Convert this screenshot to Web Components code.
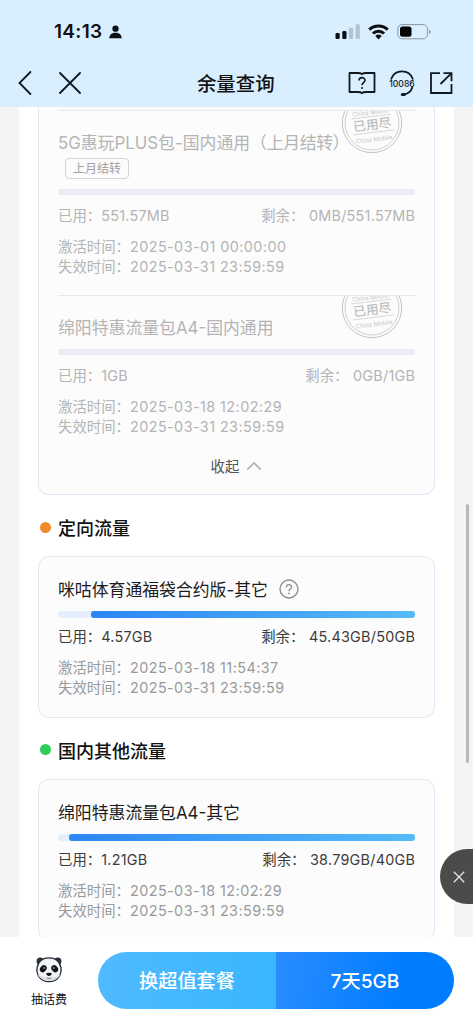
<!DOCTYPE html>
<html lang="zh-CN">
<head>
<meta charset="utf-8">
<title>余量查询</title>
<style>
  html, body { margin: 0; height: 100%; }
  body { font-family: Inter, "Noto Sans CJK SC", sans-serif; color: #111; background: #fff; overflow: hidden; }
</style>
</head>
<body>
<balance-app></balance-app>
<script>
const define = (name, html) => customElements.define(name, class extends HTMLElement {
  connectedCallback() {
    if (this.shadowRoot) return;
    const root = this.attachShadow({ mode: 'open' });
    root.innerHTML = typeof html === 'function' ? html(this) : html;
  }
});

define('status-bar', `
<style>
  :host { display: flex; height: 59px; padding: 0 41px 0 54px; align-items: flex-start; justify-content: space-between; box-sizing: border-box; }
  .left { display: flex; align-items: center; margin-top: 22px; height: 20px; }
  .time { font-size: 19px; font-weight: 600; letter-spacing: 0.3px; line-height: 20px; width: 55px; white-space: nowrap; }
  .right { display: flex; align-items: center; margin-top: 22px; height: 20px; }
  svg { display: block; }
</style>
<div class="left"><span class="time">14:13</span>
  <svg width="13" height="14" viewBox="0 0 14 14" fill="#0b1014"><circle cx="7" cy="3.400" r="3.400"/><path d="M.3 13.800C.5 9.400 3.400 7.700 7 7.700s6.500 1.700 6.700 6.100z"/></svg>
</div>
<div class="right">
  <svg width="97" height="20" viewBox="0 0 97 20">
    <g fill="#0b0f12"><rect x="0.500" y="11" width="4.200" height="6" rx="1.200"/><rect x="7.300" y="9" width="4.200" height="8" rx="1.200"/></g>
    <g fill="#b2c3d1"><rect x="13.900" y="5.700" width="4.200" height="11.300" rx="1.200"/><rect x="20.600" y="2.300" width="4.200" height="14.700" rx="1.200"/></g>
    <g fill="none" stroke="#0b0f12" stroke-width="3"><path d="M34.300 7.600a13.300 13.300 0 0 1 18.400 0"/><path d="M37.900 11.500a8 8 0 0 1 11.200 0"/></g>
    <path d="M43.500 17.400l-3.200-3.500a4.700 4.700 0 0 1 6.400 0z" fill="#0b0f12"/>
    <rect x="62.800" y="2.600" width="29.600" height="14.200" rx="4.300" fill="none" stroke="#8798a4"/>
    <rect x="65" y="4.600" width="11.500" height="10.200" rx="2.500" fill="#030506"/>
    <path d="M94 7.500c2.200.8 2.200 3.800 0 4.600z" fill="#8798a4"/>
  </svg>
</div>`);

define('nav-bar', `
<style>
  :host { display: grid; grid-template-columns: 1fr auto 1fr; align-items: center; height: 48px; padding: 0 20px 0 17px; }
  h1 { margin: 1px 0 0 1.500px; font-size: 19.400px; font-weight: 500; line-height: 24px; }
  .l, .r { display: flex; align-items: center; }
  .l { gap: 25.500px; } .r { justify-content: flex-end; gap: 12.500px; }
  svg { display: block; fill: none; stroke: #101820; stroke-width: 1.8; }
</style>
<div class="l">
  <svg width="16" height="24" viewBox="0 0 16 24"><path d="M13.400 1L2.500 12l10.900 11" stroke-linecap="round"/></svg>
  <svg width="22" height="22" viewBox="0 0 22 22"><path d="M1 1l20 20M21 1L1 21" stroke-linecap="round"/></svg>
</div>
<h1><slot></slot></h1>
<div class="r">
  <svg width="28" height="24" viewBox="0 0 28 24"><path d="M14 3.200c-1.200-1.200-2.300-1.200-4-1.200H1.500v19H10c1.700 0 2.800 0 4 1.200 1.200-1.200 2.300-1.200 4-1.200h8.500V2H18c-1.700 0-2.800 0-4 1.200z" stroke-linejoin="round"/><path d="M11 9.600c0-4 6-3.900 6-.3 0 2.400-3 2.400-3 5" stroke-width="1.600"/><circle cx="14" cy="17" r="1" fill="#101820" stroke="none"/></svg>
  <svg width="28" height="28" viewBox="0 0 28 28"><g transform="translate(-1 0)"><path d="M3.300 9.800C5 4.900 9 2.300 14 2.300s9 2.600 10.700 7.500M24.300 18.500c-1.300 4-4.200 6.300-8.800 7" stroke-linecap="round"/><path d="M14.300 25.600h2" stroke-width="3" stroke-linecap="round"/><text x="14" y="17.700" text-anchor="middle" font-size="8.800" font-weight="500" fill="#101820" stroke="none" textLength="25.500" lengthAdjust="spacingAndGlyphs">10086</text></g></svg>
  <svg width="24" height="24" viewBox="0 0 24 24"><path d="M11 2.200H2V22h20.500v-9M14.500 2.200h8v8M22.300 2.400L11.500 13"/></svg>
</div>`);

define('used-stamp', `
<style>:host { display: block; width: 62px; height: 62px; } svg { display: block; }</style>
<svg width="62" height="62" viewBox="0 0 62 62">
  <g fill="none" stroke="#c4c4c6"><circle cx="31" cy="31" r="29.700" stroke-width="1"/><circle cx="31" cy="31" r="27" stroke-width=".8"/></g>
  <g transform="rotate(-7 31 31)" fill="#bdbdbf" text-anchor="middle">
    <path d="M11 24.500h40M11 40.500h41" stroke="#cfcfd1" stroke-width=".8"/>
    <text x="31" y="37.300" font-size="12.800" font-weight="500">已用尽</text>
    <text x="31" y="49.500" font-size="6" fill="#c6c6c8" textLength="37">China Mobile</text>
    <text x="31" y="22.500" font-size="6" fill="#c6c6c8" textLength="37">China Mobile</text>
  </g>
</svg>`);

define('usage-item', el => {
  const a = n => el.getAttribute(n) || '';
  const has = n => el.hasAttribute(n);
  return `
<style>
  :host { display: block; position: relative; overflow: hidden; color: #3c3c3c; }
  :host([spent]) { color: #b4b4b4; border-top: 1px solid #e6e6ee; height: 184px; }
  .title { display: flex; align-items: center; height: 24px; margin-top: 19px; font-size: 16.850px; color: #1c1c1e; white-space: nowrap; }
  :host([spent]) .title { color: inherit; margin-top: 18.500px; }
  .title svg { margin-left: 11px; margin-top: 1px; }
  em { font-style: normal; letter-spacing: -0.300px; }
  .tag { display: block; box-sizing: border-box; width: 64px; height: 21px; margin: 4.500px 0 0 7px; border: 1px solid #d4d4d4; border-radius: 4px; font-size: 12px; line-height: 20px; text-align: center; color: #a0a0a0; }
  .bar { height: 6.500px; margin-top: 10px; border-radius: 2px; background: #ebebf4; display: flex; justify-content: flex-end; }
  .tag + .bar { margin-top: 9.500px; }
  :host(:not([spent])) .bar { background: #e4eefc; border-radius: 3px; margin-top: 11px; }
  .fill { border-radius: 3px; background: linear-gradient(90deg, #2a86f6, #55bbf8); }
  .row { display: flex; justify-content: space-between; height: 20px; line-height: 20px; margin-top: 10.500px; font-size: 14.400px; white-space: nowrap; }
  :host(:not([spent])) .row { margin-top: 9.500px; }
  .dates { margin-top: 11px; font-size: 14.400px; line-height: 20px; color: #9a9a9a; white-space: nowrap; }
  :host([spent]) .dates { color: inherit; }
  .line, .pair { display: flex; }
  .pair.r i { margin-right: 4.500px; }
  i { font-style: normal; }
  b { font-weight: 400; letter-spacing: 0.250px; }
  .r b { margin-right: -0.2px; }
  .dates b { letter-spacing: 0.430px; }
  used-stamp { position: absolute; right: 12px; top: -19px; }
</style>
${has('spent') ? '<used-stamp></used-stamp>' : ''}
<div class="title"><span>${a('name')}${has('note') ? `<em>${a('note')}</em>` : ''}</span>${has('help') ? '<svg width="20" height="20" viewBox="0 0 20 20" fill="none" stroke="#8e8e93" stroke-width="1.400"><circle cx="10" cy="10" r="9"/><path d="M7.400 8.200c0-3.500 5.200-3.400 5.200-.2 0 2-2.600 2.100-2.600 4.200"/><circle cx="10" cy="14.400" r=".9" fill="#8e8e93" stroke="none"/></svg>' : ''}</div>
${has('tag') ? `<span class="tag">${a('tag')}</span>` : ''}
<div class="bar">${has('spent') ? '' : `<div class="fill" style="width:${a('percent')}%"></div>`}</div>
<div class="row"><span class="pair"><i>已用：</i><b>${a('used')}</b></span><span class="pair r"><i>剩余：</i><b>${a('left')}</b></span></div>
<div class="dates"><div class="line"><i>激活时间：</i><b>${a('start')}</b></div><div class="line"><i>失效时间：</i><b>2025-03-31 23:59:59</b></div></div>`;
});

define('usage-card', `
<style>
  :host { display: block; box-sizing: border-box; margin: 0 19px; padding: 0 19px; border: 1px solid #dfe8f4; border-radius: 11px; background: #fcfcfd; }
  :host([continued]) { border-top: 0; border-radius: 0 0 11px 11px; padding-top: 3px; }
</style><slot></slot>`);

define('section-title', `
<style>
  :host { display: flex; align-items: center; height: 26px; padding-left: 21px; gap: 7px; font-size: 18px; font-weight: 500; color: #111; }
  .dot { width: 11px; height: 11px; border-radius: 50%; background: var(--dot); }
</style><span class="dot"></span><slot></slot>`);

define('collapse-button', `
<style>
  :host { display: flex; align-items: center; justify-content: center; gap: 7px; height: 22px; font-size: 14.400px; color: #555; }
  svg { display: block; }
</style><slot></slot><svg width="16" height="10" viewBox="0 0 16 10" fill="none" stroke="#b3b3b3" stroke-width="1.700"><path d="M1.200 8.700L8 2l6.800 6.700"/></svg>`);

define('action-bar', `
<style>
  :host { display: flex; height: 87px; box-sizing: border-box; padding: 15px 19px 0 0; background: #fff; }
  .gift { width: 98px; display: flex; flex-direction: column; align-items: center; padding-top: 4px; box-sizing: border-box; font-size: 12px; color: #111; }
  .gift svg { display: block; }
  .gift span { line-height: 16px; margin-top: 9px; }
  .pill { flex: 1; display: flex; height: 57px; border-radius: 29px; overflow: hidden; color: #fff; font-size: 19.200px; font-weight: 500; }
  .pill div { flex: 1; display: flex; align-items: center; justify-content: center; padding-bottom: 1px; }
  .a { background: linear-gradient(90deg, #4fbaff, #39b6ff); }
  .b { background: linear-gradient(100deg, #2b8cff, #007dff 70%); }
</style>
<div class="gift">
  <svg width="28" height="27" viewBox="0 0 28 27">
    <circle cx="5.200" cy="5.200" r="3.600" fill="#28303a"/><circle cx="22.800" cy="5.200" r="3.600" fill="#28303a"/>
    <path d="M14 1.800c6 0 10.500 3.400 11.800 9.200 1.500 7.500-3 14.600-11.800 14.600S.7 18.500 2.200 11C3.500 5.200 8 1.800 14 1.800z" fill="#f2f4f6" stroke="#252c34" stroke-width="1.300"/>
    <path d="M3 18.500c5 4 17 4 22 0-1.500 4.200-6 6.400-11 6.400S4.500 22.700 3 18.500z" fill="#dce1e7"/>
    <ellipse cx="8.300" cy="12.700" rx="3" ry="3.900" transform="rotate(38 8.300 12.700)" fill="#11151a"/><ellipse cx="19.700" cy="12.700" rx="3" ry="3.900" transform="rotate(-38 19.700 12.700)" fill="#11151a"/>
    <circle cx="9.200" cy="11.900" r="1" fill="#9a8a68"/><circle cx="18.800" cy="11.900" r="1" fill="#9a8a68"/>
    <path d="M11.200 17.200c1.500-.7 4.100-.7 5.600 0 0 1.700-1.400 2.800-2.800 2.800s-2.800-1.100-2.800-2.800z" fill="#11151a"/>
    <path d="M11.800 21.800c1.400.9 3 .9 4.400 0" fill="none" stroke="#5b6066" stroke-width=".8"/>
  </svg><span>抽话费</span>
</div>
<div class="pill"><div class="a">换超值套餐</div><div class="b">7天5GB</div></div>`);

define('float-close', `
<style>
  :host { position: absolute; right: 0; top: 849px; width: 33px; height: 55px; border-radius: 27.500px 0 0 27.500px; background: #4b4b4b; display: flex; align-items: center; padding-left: 13px; box-sizing: border-box; }
</style><svg width="12" height="12" viewBox="0 0 12 12" stroke="#e4e4e4" stroke-width="1.300"><path d="M.8.8l10.400 10.400M11.200.8L.8 11.200"/></svg>`);

define('balance-app', `
<style>
  :host { display: flex; flex-direction: column; width: 473px; height: 1024px; position: relative; overflow: hidden; }
  header { background: #d9eefe; flex: none; height: 107px; }
  main { flex: 1; min-height: 0; overflow: hidden; background: #f4f4f4; padding: 0 19px; }
  .sheet { background: #fff; min-height: 100%; }
  usage-item + collapse-button { margin-top: -25.500px; }
  .one { height: 388px; } .two { height: 162px; } .three { height: 162px; }
  section-title.s1 { margin: 19px 0 16px; } section-title.s2 { margin: 18.500px 0 16.500px; }
  .thumb { position: absolute; left: 466px; top: 504px; width: 3px; height: 259px; border-radius: 2px; background: #b9b9b9; }
  action-bar { flex: none; }
</style>
<header><status-bar></status-bar><nav-bar>余量查询</nav-bar></header>
<main><div class="sheet">
  <usage-card continued class="one">
    <usage-item spent name="5G惠玩PLUS包-国内通用" note="（上月结转）" tag="上月结转" used="551.57MB" left="0MB/551.57MB" start="2025-03-01 00:00:00"></usage-item>
    <usage-item spent name="绵阳特惠流量包A4-国内通用" used="1GB" left="0GB/1GB" start="2025-03-18 12:02:29"></usage-item>
    <collapse-button>收起</collapse-button>
  </usage-card>
  <section-title class="s1" style="--dot:#f18a2d">定向流量</section-title>
  <usage-card class="two"><usage-item help percent="90.900" name="咪咕体育通福袋合约版-其它" used="4.57GB" left="45.43GB/50GB" start="2025-03-18 11:54:37"></usage-item></usage-card>
  <section-title class="s2" style="--dot:#2fcd5b">国内其他流量</section-title>
  <usage-card class="three"><usage-item percent="97" name="绵阳特惠流量包A4-其它" used="1.21GB" left="38.79GB/40GB" start="2025-03-18 12:02:29"></usage-item></usage-card>
</div></main>
<action-bar></action-bar>
<div class="thumb"></div>
<float-close></float-close>`);
</script>
</body>
</html>
